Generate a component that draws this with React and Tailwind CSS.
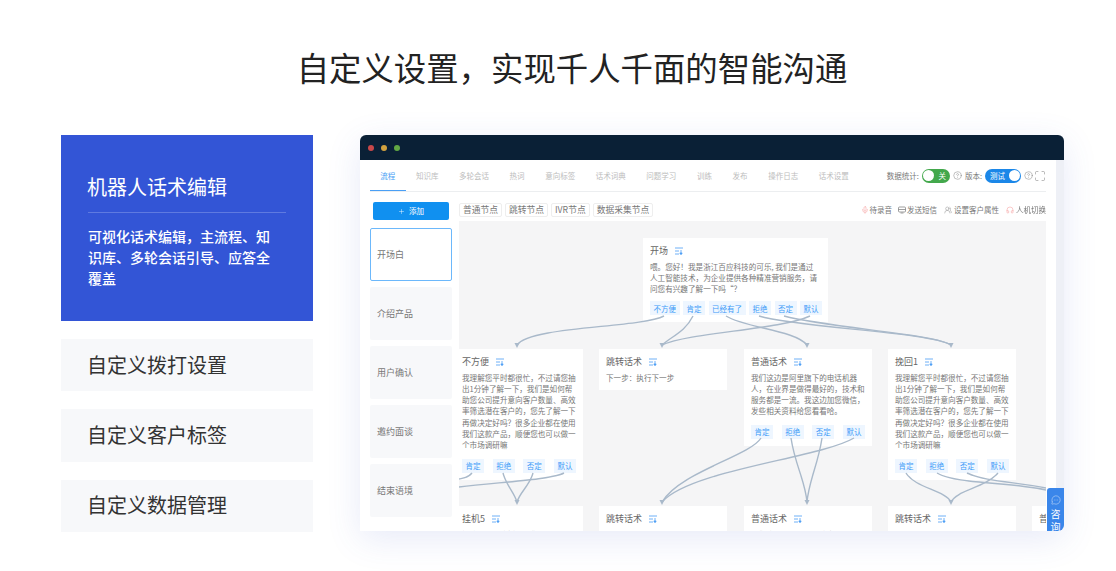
import { CircleHelp, Headphones, Maximize, MessageCircleMore, Mic, Plus, UsersRound } from "lucide-react";

const cjk = "font-['Noto_Sans_CJK_SC','Liberation_Sans',sans-serif]";

const tabs = ["知识库", "多轮会话", "热词", "意向标签", "话术词典", "问题学习", "训练", "发布", "操作日志", "话术设置"];
const scenes = ["介绍产品", "用户确认", "邀约面谈", "结束语境"];
const chips = ["普通节点", "跳转节点", "IVR节点", "数据采集节点"];
const answers = ["肯定", "拒绝", "否定", "默认"];
const longText = "我理解您平时都很忙，不过请您抽出1分钟了解一下，我们是如何帮助您公司提升意向客户数量、高效率筛选潜在客户的，您先了解一下再做决定好吗？很多企业都在使用我们这款产品，顺便您也可以做一个市场调研嘛";

// page coordinates, the svg viewBox starts at the canvas corner
const edges = [
  "M664 316C640 328 530 326 517 345",
  "M693 316C685 332 672 336 662 345",
  "M810 316C780 330 690 332 662 345",
  "M726 316C745 328 795 330 807 345",
  "M759 316C800 328 930 332 951 345",
  "M784 316C830 328 935 334 951 345",
  "M472 473C468 478 464 478 459 479",
  "M564 473C550 480 500 482 459 487",
  "M503 473C506 485 514 492 517 502",
  "M533 473C530 485 520 492 517 502",
  "M761 438C750 456 680 472 662 502",
  "M854 438C820 458 690 470 662 502",
  "M791 438C795 465 805 480 807 502",
  "M822 438C818 465 809 480 807 502",
  "M906 473C915 488 945 490 951 502",
  "M998 473C985 488 957 490 951 502",
  "M937 473C955 484 1010 482 1046 490",
  "M967 473C985 482 1020 482 1046 488",
];
const arrows = [517, 662, 807, 951];

function SortIcon() {
  return (
    <svg viewBox="0 0 8 8" className="ml-[7px] h-[8px] w-[8px] shrink-0 text-[#4a9df5]" fill="none" stroke="currentColor" strokeWidth="0.8">
      <path d="M0 1H8M0 4H4M0 7H4M6 3V7.5" />
      <path d="M4.8 6L6 7.6L7.2 6Z" fill="currentColor" />
    </svg>
  );
}

function Tag({ children }) {
  return (
    <span className="flex h-[14px] shrink-0 items-center whitespace-nowrap bg-[#eef6ff] px-[3.5px] text-[7.5px] text-[#3d9bf8]">
      {children}
    </span>
  );
}

function FlowNode({ title, text, tags, className }) {
  return (
    <div className={`absolute w-[128px] bg-white p-[7px] ${className}`}>
      <div className="flex h-[12px] items-center text-[9px] leading-[12px] text-[#666]">
        {title}
        <SortIcon />
      </div>
      {text && <p className="mt-[3.5px] text-[7.58px] leading-[11.3px] text-[#777]">{text}</p>}
      {tags && (
        <div className="mt-[8px] flex justify-between">
          {tags.map((t) => (
            <Tag key={t}>{t}</Tag>
          ))}
        </div>
      )}
    </div>
  );
}

function ProductWindow() {
  return (
    <div className="relative h-[396px] w-[704px] overflow-hidden rounded-t-[6px] rounded-br-[6px] shadow-[0_8px_34px_rgba(70,90,200,0.13)]">
      <div className="flex h-full flex-col blur-[0.5px]">
        <div className="flex h-[25px] shrink-0 items-center gap-[7px] bg-[#0a2036] pl-[8px]">
          <span className="h-[6px] w-[6px] rounded-full bg-[#c8484a]" />
          <span className="h-[6px] w-[6px] rounded-full bg-[#d3a23f]" />
          <span className="h-[6px] w-[6px] rounded-full bg-[#62a844]" />
        </div>
        <div className="flex min-h-0 flex-1">
          <div className="flex min-w-0 flex-1 flex-col bg-white px-[10px]">
            <div className="flex h-[32px] shrink-0 items-center justify-between border-b border-[#eceef0] text-[7.5px]">
              <div className="flex h-full">
                <span className="flex items-center border-b border-[#4a9ff5] px-[10.3px] pt-[1px] text-[#4a9ff5]">流程</span>
                {tabs.map((t) => (
                  <span key={t} className="flex items-center px-[10.3px] pt-[1px] text-[#bdbdbd]">{t}</span>
                ))}
              </div>
              <div className="flex items-center text-[#777]">
                <span>数据统计:</span>
                <span className="ml-[3px] flex h-[14px] w-[28px] items-center rounded-full bg-[#43a84c] pl-[1.5px] text-white">
                  <span className="h-[11px] w-[11px] rounded-full bg-white" />
                  <span className="ml-[4px]">关</span>
                </span>
                <CircleHelp size={9} strokeWidth={1.2} className="ml-[3px]" />
                <span className="ml-[3px]">版本:</span>
                <span className="ml-[3px] flex h-[14px] w-[36px] items-center justify-between rounded-full bg-[#1b87e8] pl-[5px] pr-[1.5px] text-white">
                  测试
                  <span className="h-[11px] w-[11px] rounded-full bg-white" />
                </span>
                <CircleHelp size={9} strokeWidth={1.2} className="ml-[3px]" />
                <Maximize size={12} strokeWidth={1} className="ml-[1px]" />
              </div>
            </div>
            <div className="flex min-h-0 flex-1">
              <div className="flex w-[82px] shrink-0 flex-col">
                <button className="mx-[3px] mt-[10px] flex h-[18px] items-center justify-center gap-[4px] rounded-[2px] bg-[#1090f0] text-[7.5px] text-white">
                  <Plus size={7} strokeWidth={1.5} />
                  添加
                </button>
                <div className="mt-[8px] flex h-[53px] items-center rounded-[2px] border border-[#6cb8fb] bg-white pl-[6px] text-[9px] text-[#777]">开场白</div>
                {scenes.map((s) => (
                  <div key={s} className="mt-[6px] flex h-[53px] items-center rounded-[2px] bg-[#f7f8fa] pl-[7px] text-[9px] text-[#777]">
                    {s}
                  </div>
                ))}
              </div>
              <div className="ml-[7px] flex min-w-0 flex-1 flex-col">
                <div className="flex h-[29px] shrink-0 items-center justify-between pt-[6px] text-[7.5px] text-[#777]">
                  <div className="flex gap-[3px] text-[8.75px]">
                    {chips.map((c) => (
                      <span key={c} className="flex h-[14px] items-center rounded-[2px] border border-[#eeeeee] px-[3px]">{c}</span>
                    ))}
                  </div>
                  <div className="flex items-center">
                    <Mic size={8} strokeWidth={1.2} className="text-[#f27f7f]" />
                    <span className="ml-[1px]">待录音</span>
                    <svg viewBox="0 0 8 8" className="ml-[6px] h-[8px] w-[8px]" fill="none" stroke="#777" strokeWidth="0.7">
                      <rect x="0.5" y="1" width="7" height="5" rx="1" />
                      <path d="M0.5 3.5H7.5M2.5 7H5.5" />
                    </svg>
                    <span className="ml-[1px]">发送短信</span>
                    <UsersRound size={8} strokeWidth={1.2} className="ml-[7px]" />
                    <span className="ml-[2px]">设置客户属性</span>
                    <Headphones size={8} strokeWidth={1.2} className="ml-[7px] text-[#f27f7f]" />
                    <span className="ml-[2px]">人机切换</span>
                  </div>
                </div>
                <div className="relative min-h-0 flex-1 overflow-hidden bg-[#f5f5f6]">
                  <div className="absolute left-[184px] top-[17px] w-[185px] bg-white p-[7px]">
                    <div className="flex h-[12px] items-center text-[9px] text-[#666]">
                      开场
                      <SortIcon />
                    </div>
                    <p className="mt-[3.5px] pr-[3px] text-[7.6px] leading-[11.3px] text-[#777]">
                      喂。您好！我是浙江百应科技的可乐, 我们是通过人工智能技术，为企业提供各种精准营销服务，请问您有兴趣了解一下吗“？
                    </p>
                    <div className="mt-[7px] flex gap-[3.5px]">
                      {["不方便", "肯定", "已经有了", "拒绝", "否定", "默认"].map((t) => (
                        <Tag key={t}>{t}</Tag>
                      ))}
                    </div>
                  </div>
                  <FlowNode className="-left-[4px] top-[128px]" title="不方便" text={longText} tags={answers} />
                  <FlowNode className="left-[140px] top-[128px]" title="跳转话术" text="下一步：执行下一步" />
                  <FlowNode className="left-[285px] top-[128px]" title="普通话术" text="我们这边是阿里旗下的电话机器人，在业界是做得最好的，技术和服务都是一流。我这边加您微信，发些相关资料给您看看哈。" tags={answers} />
                  <FlowNode className="left-[429px] top-[128px]" title="挽回1" text={longText} tags={answers} />
                  <FlowNode className="-left-[4px] top-[285px]" title="挂机5" text="好的，那先这样，祝您工作顺利，再见" />
                  <FlowNode className="left-[140px] top-[285px]" title="跳转话术" text="下一步：执行下一步" />
                  <FlowNode className="left-[285px] top-[285px]" title="普通话术" text="我们这边是阿里旗下的电话机器人" />
                  <FlowNode className="left-[429px] top-[285px]" title="跳转话术" text="下一步：执行下一步" />
                  <FlowNode className="left-[573px] top-[285px]" title="普" text="我" />
                  <svg viewBox="459 221 587 310" className="absolute inset-0 h-full w-full" fill="none">
                    {edges.map((d) => (
                      <path key={d} d={d} stroke="#a9b9ca" strokeWidth="1.4" />
                    ))}
                    {arrows.map((x) => (
                      <g key={x} fill="#a9b9ca">
                        <path d={`M${x - 2.5} 343L${x + 2.5} 343L${x} 348Z`} />
                        <path d={`M${x - 2.5} 500L${x + 2.5} 500L${x} 505Z`} />
                      </g>
                    ))}
                  </svg>
                </div>
              </div>
            </div>
          </div>
          <div className="w-[8px] shrink-0 bg-[#eef0f6]" />
        </div>
      </div>
      <div className="absolute bottom-0 right-0 flex h-[43px] w-[17px] flex-col items-center overflow-hidden rounded-tl-[3px] bg-[#3a86ea] pt-[7px] text-[10px] leading-[13px] text-white">
        <MessageCircleMore size={10} strokeWidth={1} className="mb-[2px] shrink-0" />
        <span>咨</span>
        <span>询</span>
      </div>
    </div>
  );
}

export default function App() {
  return (
    <div className={`h-[571px] w-[1116px] overflow-hidden bg-white pl-[61px] ${cjk}`}>
      <div className="w-[1026px]">
        <h1 className="h-[135px] pr-[4px] pt-[45px] text-center text-[32.4px] font-normal leading-[44px] text-[#222]">
          自定义设置，实现千人千面的智能沟通
        </h1>
        <div className="flex items-start gap-[47px]">
          <div className="flex w-[252px] shrink-0 flex-col gap-[18px]">
            <div className="h-[186px] bg-[#3355d6] px-[27px] pt-[37px] text-white">
              <div className="border-b border-[#5f7ae0] pb-[11px] text-[20px] leading-[29px]">
                <span className="-ml-[1px]">机器人话术编辑</span>
              </div>
              <p className="mt-[13px] pr-[6px] text-[14px] font-medium leading-[21px]">可视化话术编辑，主流程、知识库、多轮会话引导、应答全覆盖</p>
            </div>
            {["自定义拨打设置", "自定义客户标签", "自定义数据管理"].map((t) => (
              <div key={t} className="flex h-[52.33px] items-center bg-[#f7f8fa] pb-[1px] pl-[26px] text-[20px] text-[#333]">
                {t}
              </div>
            ))}
          </div>
          <ProductWindow />
        </div>
      </div>
    </div>
  );
}
